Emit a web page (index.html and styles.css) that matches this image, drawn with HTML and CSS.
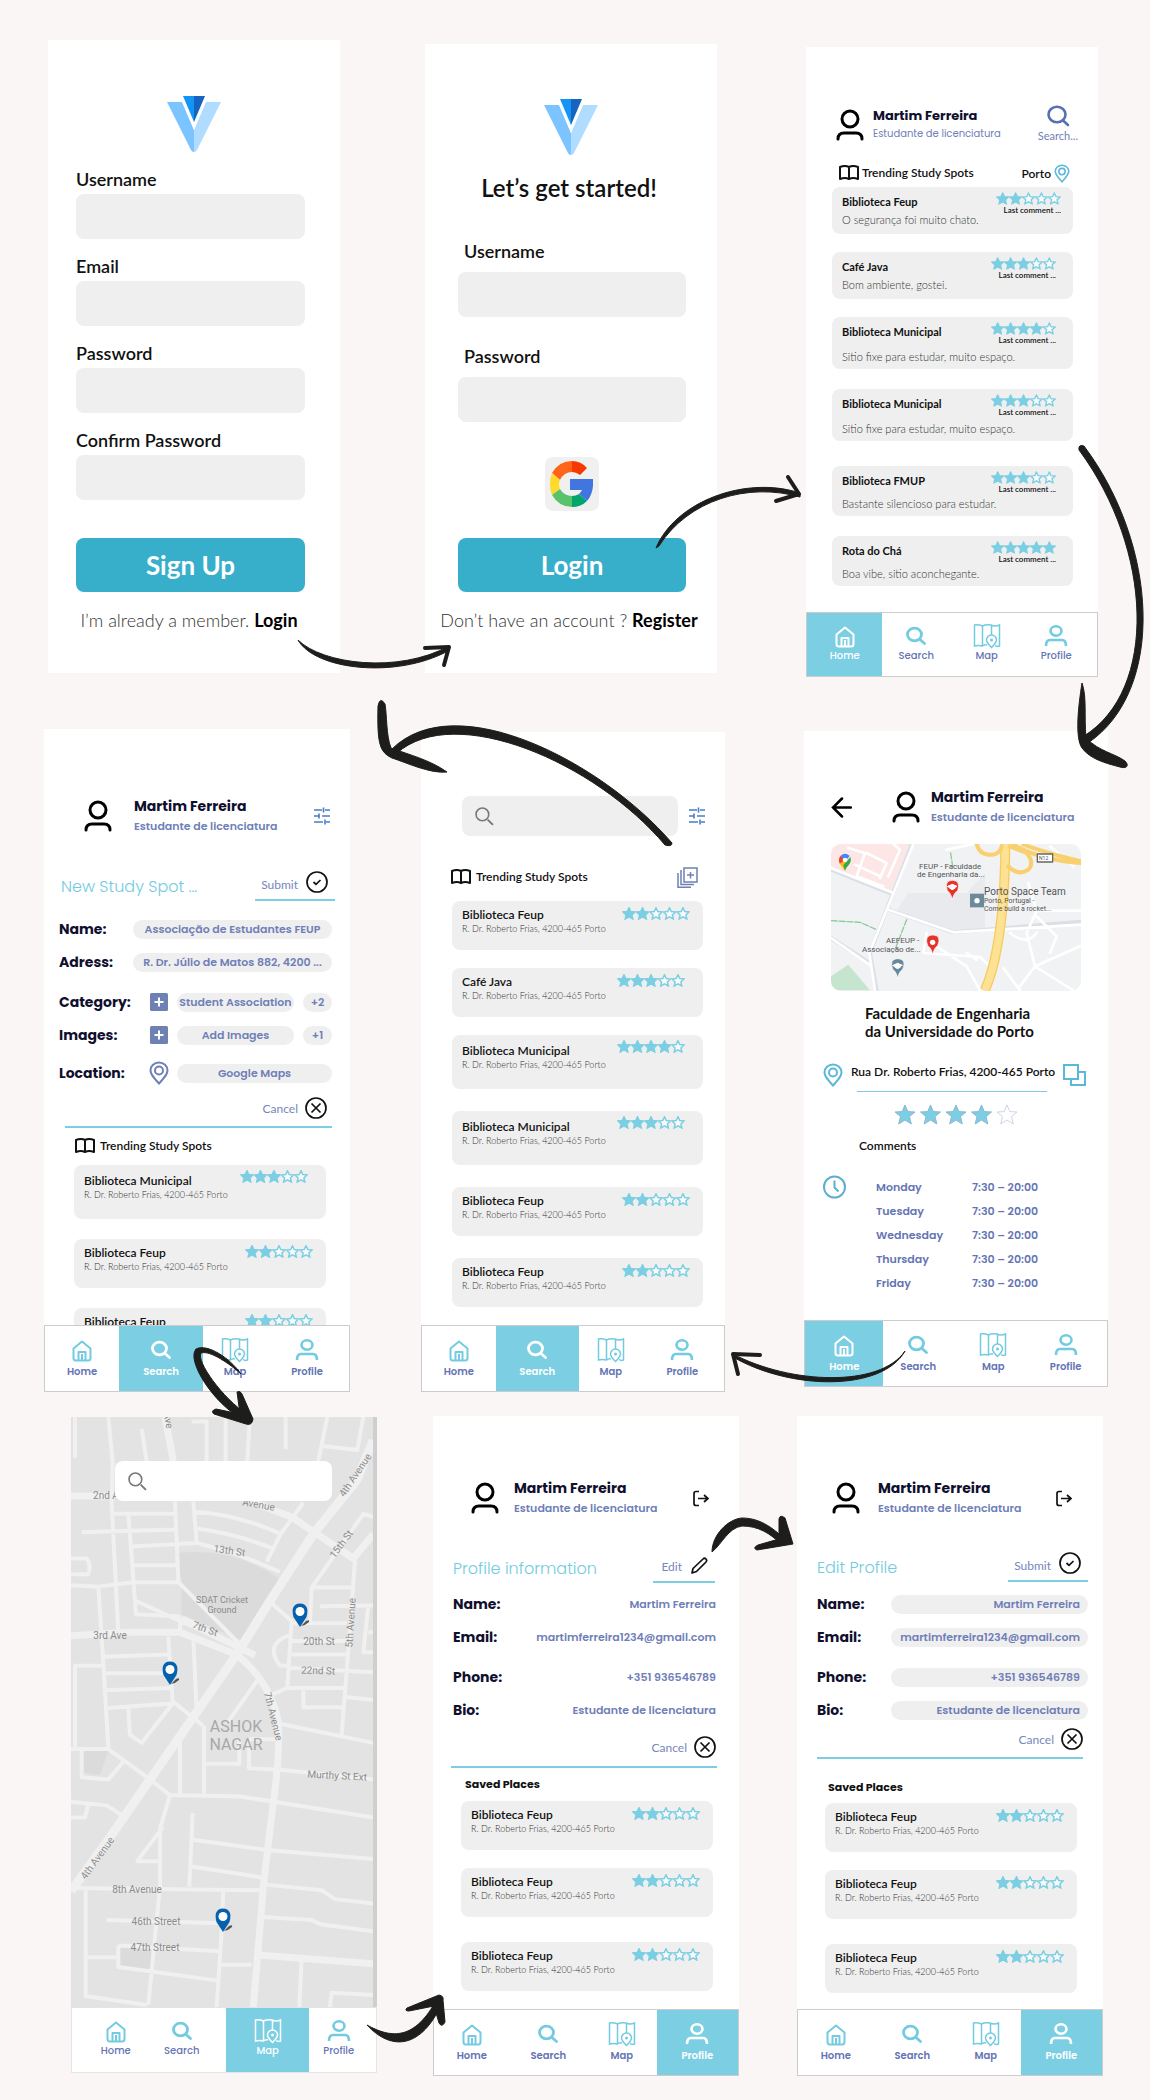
FILE: index.html
```html
<!DOCTYPE html>
<html lang="en">
<head>
<meta charset="utf-8">
<meta name="viewport" content="width=device-width, initial-scale=1">
<title>Study Spots – user flow</title>
<link rel="stylesheet" href="styles.css">
</head>
<body>
<svg class="defs" aria-hidden="true">
  <symbol id="logo" viewBox="0 0 54 56">
    <path fill="#7cc4ff" d="M0 6H15L27 34V56Q25 56 24 54Z"/><path fill="#b0dcff" d="M54 6H39L27 34V56Q29 56 30 54Z"/>
    <path fill="#fff" d="M13 0H41L27 34Z"/><path fill="#1495f5" d="M16 0H27V26Z"/><path fill="#1565c0" d="M38 0H27V26Z"/>
  </symbol>
  <symbol id="google" viewBox="0 0 43 46">
    <path fill="#ff6418" d="M22 0V11Q14 11 10 19L2 12Q9 0 22 0Z"/><path fill="#f53900" d="M22 0Q31 0 37 7L30 14Q26 11 22 11Z"/>
    <path fill="#ffda2d" d="M2 12L10 19Q8 23 10 28L2 34Q-2 23 2 12Z"/><path fill="#59c36a" d="M10 28Q14 35 22 35V46Q9 46 2 34Z"/>
    <path fill="#00a66c" d="M22 35Q26 35 29 33L37 40Q31 46 22 46Z"/><path fill="#4175df" d="M20 18H43Q44 32 37 40L29 33Q31 31 32 29H20Z"/>
  </symbol>
  <symbol id="user" viewBox="0 0 28 32"><g fill="none" stroke="currentColor" stroke-width="3" stroke-linecap="round"><ellipse cx="14" cy="10" rx="8" ry="8"/><path d="M2 30C2 25 5 24 8 24H20C23 24 26 25 26 30"/></g></symbol>
  <symbol id="find" viewBox="0 0 24 22"><ellipse cx="11" cy="9.500" rx="8.500" ry="7.800" fill="none" stroke="currentColor" stroke-width="2.600"/><path d="M17 15.500L22 20" stroke="currentColor" stroke-width="2.600" stroke-linecap="round"/></symbol>
  <symbol id="search" viewBox="-4 -4 28 26"><ellipse cx="8.500" cy="7.500" rx="7" ry="6.300" fill="none" stroke="currentColor" stroke-width="2.800"/><path d="M14 12.500L18.500 16.500" stroke="currentColor" stroke-width="2.800" stroke-linecap="round"/></symbol>
  <symbol id="search-thin" viewBox="0 0 18 18"><circle cx="7" cy="7" r="6" fill="none" stroke="#777" stroke-width="1.500"/><path d="M12 12L17 17" stroke="#777" stroke-width="1.800"/></symbol>
  <symbol id="book" viewBox="0 0 20 16"><path d="M1 2Q6 0 10 2Q14 0 19 2V14Q14 12 10 14Q6 12 1 14ZM10 2V14" fill="none" stroke="currentColor" stroke-width="2" stroke-linejoin="round"/></symbol>
  <symbol id="pin" viewBox="0 0 20 24"><g fill="none" stroke="currentColor" stroke-width="2"><path d="M10 22.500C4 16 1.500 13 1.500 9.500A8.500 8 0 0 1 18.500 9.500C18.500 13 16 16 10 22.500Z"/><circle cx="10" cy="9.500" r="4"/></g></symbol>
  <symbol id="sliders" viewBox="0 0 16 18"><path d="M0 3H8M11 3H16M9.500 0.500V5.500M0 9H5M8 9H16M5 6.500V11.500M0 15H9M12 15H16M11 12.500V17.500" fill="none" stroke="#4a7bc8" stroke-width="1.600"/></symbol>
  <symbol id="check" viewBox="0 0 22 22"><g fill="none" stroke="#111" stroke-width="1.700"><circle cx="11" cy="11" r="10"/><path d="M7.500 11L10 13.300L14.500 9"/></g></symbol>
  <symbol id="cross" viewBox="0 0 22 22"><g fill="none" stroke="#111" stroke-width="1.700"><circle cx="11" cy="11" r="10"/><path d="M6.500 6.500L15.500 15.500M15.500 6.500L6.500 15.500"/></g></symbol>
  <symbol id="plus" viewBox="0 0 18 18"><rect width="18" height="18" rx="1.500" fill="#6f80b3"/><path d="M9 4.500V13.500M4.500 9H13.500" stroke="#fff" stroke-width="2"/></symbol>
  <symbol id="stack" viewBox="0 0 21 21"><g fill="none" stroke="#6f80b3" stroke-width="1.500"><rect x="7" y="1" width="13" height="14"/><path d="M13.500 5V11.500M10 8H17M4 3V17.500H17M1 6V20.200H14"/></g></symbol>
  <symbol id="logout" viewBox="0 0 16 16"><path d="M6 1H3Q1 1 1 3V13Q1 15 3 15H6M5 8H15M11 4.500L15 8L11 11.500" fill="none" stroke="#111" stroke-width="1.700"/></symbol>
  <symbol id="pencil" viewBox="0 0 18 18"><path d="M2 16L3 11.500L13 2Q14.500 0.500 16 2Q17.300 3.500 16 5L6.500 14.500Z" fill="none" stroke="#111" stroke-width="1.700" stroke-linejoin="round"/></symbol>
  <symbol id="back" viewBox="0 0 21 21"><path d="M20 10.500H2M11 1.500L2 10.500L11 19.500" fill="none" stroke="#000" stroke-width="2.500" stroke-linecap="round"/></symbol>
  <symbol id="copy" viewBox="0 0 23 24"><g fill="none" stroke="#5cb8da" stroke-width="2"><path d="M8 15V22H22V9H16"/><rect x="1" y="2" width="14" height="14"/></g></symbol>
  <symbol id="clock" viewBox="0 0 23 23"><g fill="none" stroke="#5cb0d0" stroke-width="2"><circle cx="11.500" cy="11.500" r="10.500"/><path d="M11.500 5V12L15.500 16"/></g></symbol>
  <symbol id="home" viewBox="-4 -3 28 26"><g fill="none" stroke="currentColor" stroke-width="2" stroke-linejoin="round"><path d="M1.500 8.500L10 1.500L18.500 8.500V18Q18.500 20.500 16 20.500H4Q1.500 20.500 1.500 18Z"/><path d="M6.500 20V12H13.500V20M10 14V20"/></g></symbol>
  <symbol id="map" viewBox="0 0 28 26"><g fill="none" stroke="currentColor" stroke-width="1.500"><path d="M14 22Q12 21 9.500 23Q5 22 1.500 23V2Q5 1 9.500 3Q13 1 18 2Q22 4 26.500 2V23Q24 24 22 22.500M9.500 3V23M18.500 2V12"/><path d="M18.500 24.500Q13.500 19.500 13.500 17A5 5 0 0 1 23.500 17Q23.500 19.500 18.500 24.500Z"/></g><circle cx="18.500" cy="17" r="1.500" fill="currentColor"/></symbol>
  <symbol id="profile" viewBox="-2 -2 28 26"><g fill="none" stroke="currentColor" stroke-width="2.600"><ellipse cx="12" cy="6" rx="5.500" ry="4.700"/><path d="M2 21Q2 15 6 15H18Q22 15 22 21"/></g></symbol>
  <symbol id="star" viewBox="0 0 14 13" overflow="visible"><path d="M7 .8L8.800 4.600L13 5L9.900 7.900L10.800 12L7 9.900L3.200 12L4.100 7.900L1 5L5.200 4.600Z" stroke="#7ccfe2" stroke-width="1.500"/></symbol>
  <symbol id="s1" viewBox="0 0 14 13"><use href="#star" fill="#7ccfe2" width="14" height="13"/></symbol>
  <symbol id="s0" viewBox="0 0 14 13"><use href="#star" fill="#f8fbfc" width="14" height="13"/></symbol>
  <symbol id="rate-2" viewBox="0 0 68 13"><use href="#s1" width="14" height="13"/><use href="#s1" x="13.500" width="14" height="13"/><use href="#s0" x="27" width="14" height="13"/><use href="#s0" x="40.500" width="14" height="13"/><use href="#s0" x="54" width="14" height="13"/></symbol>
  <symbol id="rate-3" viewBox="0 0 68 13"><use href="#s1" width="14" height="13"/><use href="#s1" x="13.500" width="14" height="13"/><use href="#s1" x="27" width="14" height="13"/><use href="#s0" x="40.500" width="14" height="13"/><use href="#s0" x="54" width="14" height="13"/></symbol>
  <symbol id="rate-4" viewBox="0 0 68 13"><use href="#s1" width="14" height="13"/><use href="#s1" x="13.500" width="14" height="13"/><use href="#s1" x="27" width="14" height="13"/><use href="#s1" x="40.500" width="14" height="13"/><use href="#s0" x="54" width="14" height="13"/></symbol>
  <symbol id="rate-5" viewBox="0 0 68 13"><use href="#s1" width="14" height="13"/><use href="#s1" x="13.500" width="14" height="13"/><use href="#s1" x="27" width="14" height="13"/><use href="#s1" x="40.500" width="14" height="13"/><use href="#s1" x="54" width="14" height="13"/></symbol>
  <symbol id="map-pin" viewBox="0 0 22 26" overflow="visible"><path d="M9 23L14 18Q18 16 17 19Q14 22 9 23Z" fill="#555"/><path d="M8 24L1.500 14Q-2 1 8 .5Q18 1 14.500 14Z" fill="#0560ad"/><ellipse cx="8" cy="8.500" rx="4.500" ry="4.500" fill="#fff"/></symbol>
</svg>

<main class="board">
  <div class="row row-auth">
    <section class="screen screen-signup">
      <svg class="logo" role="img" aria-label="Logo"><use href="#logo"/></svg>
      <form class="auth-form">
        <div class="field"><label for="su-user">Username</label><input id="su-user" type="text"></div>
        <div class="field"><label for="su-email">Email</label><input id="su-email" type="email"></div>
        <div class="field"><label for="su-pass">Password</label><input id="su-pass" type="password"></div>
        <div class="field"><label for="su-conf">Confirm Password</label><input id="su-conf" type="password"></div>
        <button class="primary" type="button">Sign Up</button>
      </form>
      <p class="switch">I’m already a member. <a href="#">Login</a></p>
    </section>

    <section class="screen screen-login">
      <svg class="logo" role="img" aria-label="Logo"><use href="#logo"/></svg>
      <h1>Let’s get started!</h1>
      <form class="auth-form">
        <div class="field"><label for="li-user">Username</label><input id="li-user" type="text"></div>
        <div class="field"><label for="li-pass">Password</label><input id="li-pass" type="password"></div>
        <button class="google" type="button" aria-label="Sign in with Google"><svg><use href="#google"/></svg></button>
        <button class="primary" type="button">Login</button>
      </form>
      <p class="switch">Don’t have an account ? <a href="#">Register</a></p>
    </section>

    <section class="screen screen-home">
      <header class="who">
        <svg class="user"><use href="#user"/></svg>
        <div class="who-text"><h2>Martim Ferreira</h2><p>Estudante de licenciatura</p></div>
        <button class="find" type="button"><svg><use href="#find"/></svg>Search...</button>
      </header>
      <div class="section-title"><svg class="book"><use href="#book"/></svg><h3>Trending Study Spots</h3><span class="city">Porto<svg><use href="#pin"/></svg></span></div>
      <ul class="cards review-cards">
        <li class="card gap-18"><div class="spot"><h4>Biblioteca Feup</h4><p>O segurança foi muito chato.</p></div><div class="rating"><svg role="img" aria-label="2 of 5"><use href="#rate-2"/></svg><small>Last comment ...</small></div></li>
        <li class="card gap-18"><div class="spot"><h4>Café Java</h4><p>Bom ambiente, gostei.</p></div><div class="rating inset"><svg role="img" aria-label="3 of 5"><use href="#rate-3"/></svg><small>Last comment ...</small></div></li>
        <li class="card tall gap-20"><div class="spot"><h4>Biblioteca Municipal</h4><p>Sitio fixe para estudar, muito espaço.</p></div><div class="rating inset"><svg role="img" aria-label="4 of 5"><use href="#rate-4"/></svg><small>Last comment ...</small></div></li>
        <li class="card tall gap-25"><div class="spot"><h4>Biblioteca Municipal</h4><p>Sitio fixe para estudar, muito espaço.</p></div><div class="rating inset"><svg role="img" aria-label="3 of 5"><use href="#rate-3"/></svg><small>Last comment ...</small></div></li>
        <li class="card mid gap-20"><div class="spot"><h4>Biblioteca FMUP</h4><p>Bastante silencioso para estudar.</p></div><div class="rating inset"><svg role="img" aria-label="3 of 5"><use href="#rate-3"/></svg><small>Last comment ...</small></div></li>
        <li class="card mid gap-25"><div class="spot"><h4>Rota do Chá</h4><p>Boa vibe, sitio aconchegante.</p></div><div class="rating inset"><svg role="img" aria-label="5 of 5"><use href="#rate-5"/></svg><small>Last comment ...</small></div></li>
      </ul>
      <nav class="tabs tabs-home"><a class="on" href="#"><svg><use href="#home"/></svg>Home</a><a href="#"><svg><use href="#search"/></svg>Search</a><a href="#"><svg><use href="#map"/></svg>Map</a><a href="#"><svg><use href="#profile"/></svg>Profile</a></nav>
    </section>
  </div>

  <div class="row row-spots">
    <section class="screen screen-new">
      <header class="who">
        <svg class="user"><use href="#user"/></svg>
        <div class="who-text"><h2>Martim Ferreira</h2><p>Estudante de licenciatura</p></div>
        <button class="icon-btn" type="button" aria-label="Filters"><svg class="sliders"><use href="#sliders"/></svg></button>
      </header>
      <div class="form-title"><h3>New Study Spot ...</h3><button type="button" class="action">Submit<svg><use href="#check"/></svg></button></div>
      <form class="details">
        <div class="line"><label for="n-name">Name:</label><input id="n-name" value="Associação de Estudantes FEUP"></div>
        <div class="line"><label for="n-addr">Adress:</label><input id="n-addr" value="R. Dr. Júlio de Matos 882, 4200 ..."></div>
        <div class="line wide-gap"><label for="n-cat">Category:</label><svg class="plus"><use href="#plus"/></svg><input id="n-cat" value="Student Association"><button type="button" class="more">+2</button></div>
        <div class="line"><label for="n-img">Images:</label><svg class="plus"><use href="#plus"/></svg><input id="n-img" value="Add Images"><button type="button" class="more">+1</button></div>
        <div class="line"><label for="n-loc">Location:</label><svg class="place"><use href="#pin"/></svg><input id="n-loc" value="Google Maps"></div>
      </form>
      <button type="button" class="cancel">Cancel<svg><use href="#cross"/></svg></button>
      <hr>
      <div class="section-title"><svg class="book"><use href="#book"/></svg><h3>Trending Study Spots</h3></div>
      <ul class="cards clipped">
        <li class="card tall gap-20"><div class="spot"><h4>Biblioteca Municipal</h4><p>R. Dr. Roberto Frias, 4200-465 Porto</p></div><div class="rating inset"><svg role="img" aria-label="3 of 5"><use href="#rate-3"/></svg></div></li>
        <li class="card gap-20"><div class="spot"><h4>Biblioteca Feup</h4><p>R. Dr. Roberto Frias, 4200-465 Porto</p></div><div class="rating"><svg role="img" aria-label="2 of 5"><use href="#rate-2"/></svg></div></li>
        <li class="card"><h4>Biblioteca Feup</h4><div class="rating"><svg role="img" aria-label="2 of 5"><use href="#rate-2"/></svg></div></li>
      </ul>
      <nav class="tabs tabs-search"><a href="#"><svg><use href="#home"/></svg>Home</a><a class="on" href="#"><svg><use href="#search"/></svg>Search</a><a href="#"><svg><use href="#map"/></svg>Map</a><a href="#"><svg><use href="#profile"/></svg>Profile</a></nav>
    </section>

    <section class="screen screen-search">
      <div class="search-row"><label class="search-box"><svg><use href="#search-thin"/></svg><input type="search" aria-label="Search spots"></label><button class="icon-btn" type="button" aria-label="Filters"><svg class="sliders"><use href="#sliders"/></svg></button></div>
      <div class="section-title"><svg class="book"><use href="#book"/></svg><h3>Trending Study Spots</h3><button class="icon-btn" type="button" aria-label="Add spot"><svg class="stack"><use href="#stack"/></svg></button></div>
      <ul class="cards">
        <li class="card gap-18"><div class="spot"><h4>Biblioteca Feup</h4><p>R. Dr. Roberto Frias, 4200-465 Porto</p></div><div class="rating"><svg role="img" aria-label="2 of 5"><use href="#rate-2"/></svg></div></li>
        <li class="card gap-18"><div class="spot"><h4>Café Java</h4><p>R. Dr. Roberto Frias, 4200-465 Porto</p></div><div class="rating inset"><svg role="img" aria-label="3 of 5"><use href="#rate-3"/></svg></div></li>
        <li class="card tall gap-22"><div class="spot"><h4>Biblioteca Municipal</h4><p>R. Dr. Roberto Frias, 4200-465 Porto</p></div><div class="rating inset"><svg role="img" aria-label="4 of 5"><use href="#rate-4"/></svg></div></li>
        <li class="card tall gap-22"><div class="spot"><h4>Biblioteca Municipal</h4><p>R. Dr. Roberto Frias, 4200-465 Porto</p></div><div class="rating inset"><svg role="img" aria-label="3 of 5"><use href="#rate-3"/></svg></div></li>
        <li class="card gap-22"><div class="spot"><h4>Biblioteca Feup</h4><p>R. Dr. Roberto Frias, 4200-465 Porto</p></div><div class="rating"><svg role="img" aria-label="2 of 5"><use href="#rate-2"/></svg></div></li>
        <li class="card gap-18"><div class="spot"><h4>Biblioteca Feup</h4><p>R. Dr. Roberto Frias, 4200-465 Porto</p></div><div class="rating"><svg role="img" aria-label="2 of 5"><use href="#rate-2"/></svg></div></li>
      </ul>
      <nav class="tabs tabs-search"><a href="#"><svg><use href="#home"/></svg>Home</a><a class="on" href="#"><svg><use href="#search"/></svg>Search</a><a href="#"><svg><use href="#map"/></svg>Map</a><a href="#"><svg><use href="#profile"/></svg>Profile</a></nav>
    </section>

    <section class="screen screen-place">
      <header class="who">
        <button class="icon-btn" type="button" aria-label="Back"><svg class="back"><use href="#back"/></svg></button>
        <svg class="user"><use href="#user"/></svg>
        <div class="who-text"><h2>Martim Ferreira</h2><p>Estudante de licenciatura</p></div>
      </header>
      <svg class="place-map" viewBox="0 0 250 147" preserveAspectRatio="xMidYMid slice">
        <rect width="250" height="147" fill="#f0f2f4"/>
        <g transform="scale(.3333) translate(-153 -373)" fill="none" stroke-linecap="round" stroke-linejoin="round">
          <path d="M153 373H388L330 520L153 450Z" fill="#fde6e6"/>
          <path d="M153 770L205 735L270 812H153Z" fill="#c5e5cf"/>
          <path d="M385 520L560 520L615 460V635L520 640L345 580Z" fill="#e8eaee"/>
          <g stroke="#dcdfe6" stroke-width="12"><path d="M153 450L333 522M395 373L270 700L290 812M325 570L520 638L902 606M153 655L268 730"/></g>
          <g stroke="#fff" stroke-width="8"><path d="M153 445L335 518M400 373L268 700L285 812M325 570L520 638L902 615M153 655L268 735M205 385L255 400L230 470L310 500M260 400L320 430L300 475M340 373L360 390L325 470M225 435L300 470M440 640L430 700M430 700L600 712L640 750M470 680L560 740L600 812M770 573L740 640L765 740L720 800M765 740L880 812M900 680L765 740M745 490L770 573H902M670 745L720 812M690 640Q740 680 770 640M500 390L580 373M810 380L880 440M560 700L590 720M770 590L830 650L810 700"/></g>
          <path d="M153 603L240 608L290 630M380 600L345 690M512 400L518 440" stroke="#8acb9d" stroke-width="4" stroke-dasharray="18 6"/>
          <path d="M676 373Q675 560 650 690Q640 750 615 812" stroke="#f7cb62" stroke-width="30" stroke-linecap="butt"/><path d="M676 373Q675 560 650 690Q640 750 615 812" stroke="#fde293" stroke-width="22" stroke-linecap="butt"/>
          <path d="M590 373Q600 410 640 405Q662 400 665 380M690 380L740 400Q765 430 745 450Q715 470 685 440M700 375Q780 420 902 430M730 375Q800 400 902 425" stroke="#f9d06d" stroke-width="12"/>
          <rect x="772" y="403" width="46" height="24" fill="#fff" stroke="#666" stroke-width="4"/>
          <rect x="570" y="522" width="42" height="41" fill="#6c8a99"/><circle cx="591" cy="543" r="8" fill="#fff"/>
          <g stroke="#fff" stroke-width="2"><path d="M517 540Q513 520 502 513Q492 483 517 482Q543 483 533 513Q521 520 517 540Z" fill="#e5322d"/><path d="M458 704Q454 685 443 678Q432 647 458 646Q486 647 473 678Q462 685 458 704Z" fill="#e5322d"/><path d="M353 775Q349 756 338 749Q327 718 353 717Q381 718 368 749Q357 756 353 775Z" fill="#66899b"/></g>
          <path d="M503 500L517 494L531 500L517 507ZM509 506Q517 514 525 506M339 737L353 731L367 737L353 744ZM345 743Q353 751 361 743" fill="#fff" stroke="#fff" stroke-width="3"/><circle cx="458" cy="668" r="8" fill="#fff"/>
          <path d="M195 453L179 432L190 418L209 428Z" fill="#fbbc04"/><path d="M195 453Q197 444 206 436Q216 425 211 412L190 437Z" fill="#34a853"/><path d="M179 432Q173 418 182 408L196 420Z" fill="#ea4335"/><path d="M182 408Q196 396 209 409L196 424Z" fill="#4285f4"/><circle cx="195" cy="421" r="7" fill="#fff"/>
        </g>
        <g class="map-text"><text x="88" y="25">FEUP - Faculdade</text><text x="86" y="33">de Engenharia da...</text><text x="55" y="99">AEFEUP -</text><text x="31" y="108">Associação de...</text><text class="road-no" x="208" y="16">N12</text><text class="team" x="153" y="51">Porto Space Team</text><text class="team-sub" x="153" y="59">Porto, Portugal -</text><text class="team-sub" x="153" y="67">Come build a rocket...</text></g>
      </svg>
      <h3 class="place-name">Faculdade de Engenharia<br>da Universidade do Porto</h3>
      <div class="address"><svg class="place"><use href="#pin"/></svg><p>Rua Dr. Roberto Frias, 4200-465 Porto</p><button class="icon-btn" type="button" aria-label="Copy address"><svg class="copy"><use href="#copy"/></svg></button></div>
      <hr>
      <svg class="big-stars" viewBox="0 0 124 21" role="img" aria-label="4 of 5"><g stroke="#8cb6d3" fill="#7ccfe2"><path id="bs" d="M11 1L13.800 7.600L21 8L15.500 12.500L17.300 20L11 16L4.700 20L6.500 12.500L1 8L8.200 7.600Z"/><use href="#bs" x="25.500"/><use href="#bs" x="51"/><use href="#bs" x="76.500"/></g><path transform="translate(102)" fill="#fff" stroke="#cfd5e8" d="M11 1L13.800 7.600L21 8L15.500 12.500L17.300 20L11 16L4.700 20L6.500 12.500L1 8L8.200 7.600Z"/></svg>
      <h4 class="comments">Comments</h4>
      <div class="hours"><svg class="clock"><use href="#clock"/></svg>
        <table><tbody><tr><th scope="row">Monday</th><td>7:30 – 20:00</td></tr><tr><th scope="row">Tuesday</th><td>7:30 – 20:00</td></tr><tr><th scope="row">Wednesday</th><td>7:30 – 20:00</td></tr><tr><th scope="row">Thursday</th><td>7:30 – 20:00</td></tr><tr><th scope="row">Friday</th><td>7:30 – 20:00</td></tr></tbody></table>
      </div>
      <nav class="tabs tabs-place"><a class="on" href="#"><svg><use href="#home"/></svg>Home</a><a href="#"><svg><use href="#search"/></svg>Search</a><a href="#"><svg><use href="#map"/></svg>Map</a><a href="#"><svg><use href="#profile"/></svg>Profile</a></nav>
    </section>
  </div>

  <div class="row row-profile">
    <section class="screen screen-map">
      <div class="city-map">
        <svg viewBox="0 0 306 590" preserveAspectRatio="xMidYMid slice">
          <rect width="306" height="590" fill="#e3e3e3"/>
          <g class="roads" transform="scale(.3333 .4464) translate(-63 -38)">
            <path fill="#dbdbdb" stroke="none" d="M388 342Q560 330 690 402L580 540L395 480V400L388 390ZM100 785H175L150 840L100 835ZM205 1225H305V1280L205 1268Z"/>
            <g stroke-width="4"><path d="M175 38L188 140L185 230L205 520M75 38V130M275 65L290 137M425 48H470V137M527 38V137M600 38L592 137M707 38V110M832 38L805 137M818 103L922 112L940 38M185 255H378M95 296L378 290M235 255L258 480L390 485M245 328L440 320L560 345L690 385M250 370H380M250 408H385L600 570M375 227L385 405M430 227L440 320M430 250Q560 255 692 300L650 362M440 288Q560 300 670 333M692 300L760 230M63 415L145 418L250 408M145 418L160 590L175 780M63 355H110Q125 370 115 390H63M258 450L390 495L570 555M390 485V515M430 530L440 700M355 530L368 675L460 730M160 575L355 570M165 612H340M165 650L360 645M175 690L368 680L275 768L240 750L235 690M75 785V595H155M63 782H175L300 850L360 885L570 888L970 935M95 785V845L175 850L220 810M390 760V885M462 730V885M462 815H568V760M535 720L625 625M597 760V825L690 828L970 850M690 725L970 768M690 760H597M665 455L725 495L712 645L665 660M725 525Q640 545 690 595H720M730 500H890M725 540H890M725 570H890M720 600L970 610M712 645H880M760 650V688H880M810 462L970 460M915 360L895 560L875 750M955 460L940 565H970M955 520H970M780 500L785 420L940 255L970 262M785 420H915M890 665L970 672M63 900L170 908L215 930M63 935H105L115 905M360 885L330 960V1090L295 1355M340 955L262 1033H330M428 925L418 1090M428 985L650 1008L970 1028M425 1045L640 1070M640 1085L815 1098L855 1118L970 1128M63 1093L630 1098M107 1093V1335L290 1355M520 1100L515 1190L500 1360M170 1165L520 1172M205 1222L510 1235M107 1248H200M205 1222V1270L500 1300M508 1265H605M640 1158L785 1165L815 1175L970 1190M755 1250L748 1360M840 1360L845 1328L970 1333"/></g>
            <g stroke-width="7"><path d="M345 38L370 137M63 215H195M600 227L725 262L910 355L970 300M63 528L240 520L390 520L560 570M395 490L615 572M625 1243L970 1263"/></g>
            <g stroke-width="9"><path d="M970 90L920 180L790 300L660 450L560 570L430 710L300 850L170 990L63 1100"/></g>
            <g stroke-width="7"><path d="M560 570Q660 630 685 720Q690 800 670 900L640 1090L610 1360"/></g>
          </g>
          <rect x="302" width="4" height="590" fill="#cfcfcf"/>
          <g class="street-names">
            <text x="48" y="82">2nd Avenue</text><text transform="translate(187 91) rotate(10)">Avenue</text><text transform="translate(94 4) rotate(80)">Ave</text><text transform="translate(287 60) rotate(-56)">4th Avenue</text><text transform="translate(158 137) rotate(8)">13th St</text><text transform="translate(273 129) rotate(-53)">15th St</text>
            <text class="park" x="151" y="186">SDAT Cricket</text><text class="park" x="151" y="196">Ground</text><text transform="translate(133 215) rotate(20)">7th St</text><text x="39" y="222">3rd Ave</text><text transform="translate(283 206) rotate(-86)">5th Avenue</text><text x="248" y="228">20th St</text><text transform="translate(247 257) rotate(2)">22nd St</text><text transform="translate(199 300) rotate(76)">7th Avenue</text>
            <text class="area" x="165" y="315">ASHOK</text><text class="area" x="165" y="333">NAGAR</text><text transform="translate(266 362) rotate(3)">Murthy St Ext</text><text transform="translate(29 443) rotate(-54)">4th Avenue</text><text x="66" y="476">8th Avenue</text><text x="85" y="508">46th Street</text><text x="84" y="534">47th Street</text>
          </g>
          <use href="#map-pin" x="221" y="186" width="22" height="26"/><use href="#map-pin" x="91" y="244" width="22" height="26"/><use href="#map-pin" x="144" y="491" width="22" height="26"/>
        </svg>
        <label class="search-box"><svg><use href="#search-thin"/></svg><input type="search" aria-label="Search map"></label>
      </div>
      <nav class="tabs tabs-map"><a href="#"><svg><use href="#home"/></svg>Home</a><a href="#"><svg><use href="#search"/></svg>Search</a><a class="on" href="#"><svg><use href="#map"/></svg>Map</a><a href="#"><svg><use href="#profile"/></svg>Profile</a></nav>
    </section>

    <section class="screen screen-profile">
      <header class="who">
        <svg class="user"><use href="#user"/></svg>
        <div class="who-text"><h2>Martim Ferreira</h2><p>Estudante de licenciatura</p></div>
        <button class="icon-btn" type="button" aria-label="Log out"><svg class="logout"><use href="#logout"/></svg></button>
      </header>
      <div class="form-title"><h3>Profile information</h3><button type="button" class="action">Edit<svg><use href="#pencil"/></svg></button></div>
      <dl class="details">
        <div class="line"><dt>Name:</dt><dd>Martim Ferreira</dd></div>
        <div class="line"><dt>Email:</dt><dd>martimferreira1234@gmail.com</dd></div>
        <div class="line wide-gap"><dt>Phone:</dt><dd>+351 936546789</dd></div>
        <div class="line"><dt>Bio:</dt><dd>Estudante de licenciatura</dd></div>
      </dl>
      <button type="button" class="cancel">Cancel<svg><use href="#cross"/></svg></button>
      <hr>
      <h4 class="saved">Saved Places</h4>
      <ul class="cards">
        <li class="card gap-18"><div class="spot"><h4>Biblioteca Feup</h4><p>R. Dr. Roberto Frias, 4200-465 Porto</p></div><div class="rating"><svg role="img" aria-label="2 of 5"><use href="#rate-2"/></svg></div></li>
        <li class="card gap-25"><div class="spot"><h4>Biblioteca Feup</h4><p>R. Dr. Roberto Frias, 4200-465 Porto</p></div><div class="rating"><svg role="img" aria-label="2 of 5"><use href="#rate-2"/></svg></div></li>
        <li class="card gap-18"><div class="spot"><h4>Biblioteca Feup</h4><p>R. Dr. Roberto Frias, 4200-465 Porto</p></div><div class="rating"><svg role="img" aria-label="2 of 5"><use href="#rate-2"/></svg></div></li>
      </ul>
      <nav class="tabs tabs-profile"><a href="#"><svg><use href="#home"/></svg>Home</a><a href="#"><svg><use href="#search"/></svg>Search</a><a href="#"><svg><use href="#map"/></svg>Map</a><a class="on" href="#"><svg><use href="#profile"/></svg>Profile</a></nav>
    </section>

    <section class="screen screen-edit">
      <header class="who">
        <svg class="user"><use href="#user"/></svg>
        <div class="who-text"><h2>Martim Ferreira</h2><p>Estudante de licenciatura</p></div>
        <button class="icon-btn" type="button" aria-label="Log out"><svg class="logout"><use href="#logout"/></svg></button>
      </header>
      <div class="form-title"><h3>Edit Profile</h3><button type="button" class="action">Submit<svg><use href="#check"/></svg></button></div>
      <form class="details">
        <div class="line"><label for="e-name">Name:</label><input id="e-name" value="Martim Ferreira"></div>
        <div class="line"><label for="e-mail">Email:</label><input id="e-mail" value="martimferreira1234@gmail.com"></div>
        <div class="line wide-gap"><label for="e-phone">Phone:</label><input id="e-phone" value="+351 936546789"></div>
        <div class="line"><label for="e-bio">Bio:</label><input id="e-bio" value="Estudante de licenciatura"></div>
      </form>
      <button type="button" class="cancel">Cancel<svg><use href="#cross"/></svg></button>
      <hr>
      <h4 class="saved">Saved Places</h4>
      <ul class="cards">
        <li class="card gap-18"><div class="spot"><h4>Biblioteca Feup</h4><p>R. Dr. Roberto Frias, 4200-465 Porto</p></div><div class="rating"><svg role="img" aria-label="2 of 5"><use href="#rate-2"/></svg></div></li>
        <li class="card gap-25"><div class="spot"><h4>Biblioteca Feup</h4><p>R. Dr. Roberto Frias, 4200-465 Porto</p></div><div class="rating"><svg role="img" aria-label="2 of 5"><use href="#rate-2"/></svg></div></li>
        <li class="card gap-18"><div class="spot"><h4>Biblioteca Feup</h4><p>R. Dr. Roberto Frias, 4200-465 Porto</p></div><div class="rating"><svg role="img" aria-label="2 of 5"><use href="#rate-2"/></svg></div></li>
      </ul>
      <nav class="tabs tabs-profile"><a href="#"><svg><use href="#home"/></svg>Home</a><a href="#"><svg><use href="#search"/></svg>Search</a><a href="#"><svg><use href="#map"/></svg>Map</a><a class="on" href="#"><svg><use href="#profile"/></svg>Profile</a></nav>
    </section>
  </div>

  <svg class="arrows" viewBox="0 0 1150 2100" aria-hidden="true">
    <!-- sign up to login -->
    <path class="ink" d="M298 640C322 664 398 674 449 646L448 651C396 679 315 670 298 640Z"/><path class="pen" d="M425 648L449 647L444 665"/>
    <!-- login to home -->
    <path class="ink" d="M656 548C675 502 745 475 800 493V497C748 482 688 500 659 546Z"/><path class="pen" d="M788 477L799 494L776 501"/>
    <!-- home to place -->
    <path class="ink" d="M1084 446C1158 545 1166 690 1088 743L1084 736C1158 690 1153 550 1079 450Q1078 444 1084 446Z"/>
    <path class="ink" d="M1082 683C1087 697 1084 715 1086 738C1100 752 1114 753 1125 761C1130 766 1126 769 1120 767C1105 763 1090 759 1082 748C1075 738 1078 708 1082 683Z"/>
    <!-- search to new spot -->
    <path class="ink" d="M672 843C600 760 455 687 392 749L397 753C455 702 595 762 665 845Q672 847 672 843Z"/>
    <path class="ink" d="M378 706Q380 696 385 704C387 715 386 735 391 748C410 755 430 760 447 772C430 774 405 762 392 758C380 752 377 745 378 706Z"/>
    <!-- new spot to map -->
    <path class="ink" d="M241 1374C230 1358 207 1343 196 1349C186 1360 213 1404 244 1420L248 1415C222 1398 196 1361 201 1353C210 1350 230 1364 241 1374Z"/><path class="ink" d="M237 1392Q240 1390 242 1394L253 1419Q252 1426 246 1424L214 1414Q210 1411 216 1409L240 1414Z"/>
    <!-- place to search -->
    <path class="ink" d="M905 1351C880 1388 790 1384 733 1354V1357C790 1390 882 1392 905 1351Z"/><path class="pen" d="M760 1355L733 1354L738 1374"/>
    <!-- map to profile -->
    <path class="ink" d="M367 2025C392 2039 415 2040 437 1999L442 2003C422 2048 392 2052 367 2025Z"/><path class="ink" d="M407 2008L439 1995Q444 1996 443 2000L445 2022Q442 2028 439 2023L434 2006L409 2011Q404 2011 407 2008Z"/>
    <!-- profile to edit -->
    <path class="ink" d="M712 1552C712 1535 728 1519 742 1518C762 1518 775 1530 788 1542L782 1545C770 1533 758 1526 742 1526C728 1528 722 1544 712 1552Z"/><path class="ink" d="M779 1519Q780 1514 785 1518L793 1544L757 1550Q752 1548 758 1545L779 1539Z"/>
  </svg>
</main>
</body>
</html>
```
FILE: styles.css
```css
* { box-sizing: border-box; }
body { margin: 0; background: #faf6f5; color: #111; font-family: Lato, "Open Sans", sans-serif; }
h1, h2, h3, h4, p, ul, dl, dd { margin: 0; padding: 0; }
ul { list-style: none; }
button, input { border: 0; margin: 0; padding: 0; font: inherit; color: inherit; background: none; min-width: 0; }
a { color: inherit; text-decoration: none; }
svg { display: block; flex: none; }
hr { border: 0; margin: 0; background: #7ccfe2; height: 2px; }
.defs { position: absolute; width: 0; height: 0; }

/* Board */
.board { position: relative; max-width: 1150px; margin: 0 auto; padding: 40px 0 22px; }
.arrows { position: absolute; top: 0; left: 0; width: 100%; pointer-events: none; }
.ink { fill: #1d1d1b; stroke: #1d1d1b; stroke-width: 1; stroke-linejoin: round; }
.pen { fill: none; stroke: #1d1d1b; stroke-width: 4; stroke-linecap: round; stroke-linejoin: round; }
.row { display: grid; align-items: start; }
.row-auth { grid-template-columns: 377fr 381fr 292fr; padding: 0 52px 0 48px; }
.row-spots { grid-template-columns: 377fr 383fr 304fr; padding: 52px 42px 0 44px; }
.row-profile { grid-template-columns: 362fr 364fr 306fr; padding: 24px 47px 0 71px; }
.screen { display: flex; flex-direction: column; width: 100%; background: #fff; }
.row-auth .screen { max-width: 292px; }
.row-spots .screen { max-width: 304px; }
.row-spots .screen-new { max-width: 306px; }
.row-profile .screen { max-width: 306px; }

/* Sign up and login */
.logo { width: 54px; height: 56px; margin: 0 auto; }
.screen-signup { padding: 56px 0 41px; }
.screen-login { margin-top: 4px; padding: 55px 0 41px; }
.screen-login h1 { margin-top: 19px; padding-right: 4px; text-align: center; font-size: 24px; line-height: 28px; font-weight: 600; }
.auth-form { display: flex; flex-direction: column; gap: 15px; padding: 15px 35px 0 28px; }
.field { display: flex; flex-direction: column; gap: 3px; }
.field label { font-size: 18px; line-height: 24px; font-weight: 600; }
.field input { width: 100%; height: 45px; border-radius: 8px; background: #efefef; padding: 0 10px; }
.primary { height: 54px; border-radius: 8px; background: #37afca; color: #fff; font-size: 26px; font-weight: 700; }
.screen-signup .primary { margin-top: 23px; }
.switch { margin-top: 16px; text-align: center; font-size: 18px; line-height: 24px; font-weight: 300; color: #333; white-space: nowrap; }
.switch a { font-weight: 700; color: #000; }
.screen-signup .switch { padding-right: 10px; }
.screen-login .switch { padding-right: 4px; }
.screen-login .auth-form { gap: 27px; padding: 37px 31px 0 33px; }
.screen-login .field { gap: 9px; }
.screen-login .field label { padding-left: 6px; }
.google { align-self: center; width: 54px; height: 54px; margin-top: 8px; padding: 4px 5px; border-radius: 8px; background: #f0f0f0; }
.google svg { width: 43px; height: 46px; }

/* Person header */
.who { display: flex; align-items: center; }
.user { width: 28px; height: 34px; color: #000; }
.who h2, .who p, .details, .tabs, .saved, .form-title h3, .hours { font-family: Poppins, Inter, sans-serif; }
.who h2 { font-size: 14px; line-height: 20px; font-weight: 700; color: #100f2e; }
.who p { font-size: 11px; line-height: 20px; font-weight: 600; color: #6f80b8; }
.who-text { white-space: nowrap; }
.icon-btn { display: block; }
.who .icon-btn, .section-title .icon-btn { margin-left: auto; }
.sliders { width: 16px; height: 18px; }
.logout { width: 16px; height: 17px; }
.back { width: 21px; height: 21px; }
.stack { width: 21px; height: 21px; }

/* Section title and cards */
.section-title { display: flex; align-items: center; height: 20px; }
.section-title h3 { font-size: 12px; line-height: 20px; font-weight: 600; margin-left: 5px; }
.book { width: 20px; height: 16px; }
.cards { padding: 0 22px 0 31px; }
.card { display: flex; justify-content: space-between; height: 49px; border-radius: 8px; background: #efefef; padding: 6px 13px 0 10px; white-space: nowrap; }
.card.tall { height: 54px; padding-top: 8px; }
.spot { flex: 1; min-width: 0; }
.card h4 { font-size: 12px; line-height: 16px; font-weight: 600; }
.card p { font-size: 9px; line-height: 12px; font-weight: 300; color: #333; }
.rating { flex: none; }
.rating svg { width: 68px; height: 13px; }
.card.tall .rating svg { margin-top: -3px; }
.rating.inset { padding-right: 5px; }
.gap-18 { margin-bottom: 18px; }
.gap-20 { margin-bottom: 20px; }
.gap-22 { margin-bottom: 22px; }
.gap-25 { margin-bottom: 25px; }

/* Tabs */
.tabs { display: grid; height: 67px; border: 1px solid #ccc; background: #fff; color: #6474b4; font-size: 10px; line-height: 14px; font-weight: 600; }
.tabs a { display: flex; flex-direction: column; align-items: center; padding-top: 11px; }
.tabs svg { width: 28px; height: 26px; margin-bottom: 2px; color: #72cbe0; }
.tabs .on { background: #7ccfe2; color: #fff; }
.tabs .on svg { color: #fff; }
.tabs-home { grid-template-columns: 76fr 68fr 74fr 66fr; padding-right: 8px; height: 65px; font-weight: 500; }
.tabs-home a, .tabs-map a { padding-top: 10px; }
.tabs-home svg, .tabs-map svg { margin-bottom: 0; }
.tabs-place { grid-template-columns: 79fr 70fr 81fr 65fr; padding-right: 9px; }
.tabs-search { grid-template-columns: 74fr 84fr 64fr 80fr; padding-right: 2px; }
.tabs-profile { grid-template-columns: 76fr 78fr 70fr 82fr; }
.tabs-map { grid-template-columns: 78fr 77fr 84fr 67fr; height: 66px; border-color: #e4e4e4; font-weight: 500; }
.tabs-map a:first-child { padding-left: 10px; }
.tabs-map a:nth-child(2) { padding-right: 12px; }
.tabs-map a:last-child { padding-right: 8px; }

/* Home */
.screen-home { margin-top: 7px; padding-top: 57px; }
.screen-home .who { height: 42px; padding: 0 20px 0 30px; gap: 9px; }
.screen-home .who h2 { font-size: 13px; line-height: 18px; }
.screen-home .who p { font-size: 10px; line-height: 18px; font-weight: 400; }
.find { margin-left: auto; display: flex; flex-direction: column; align-items: center; font-size: 11px; line-height: 18px; color: #6f80b8; }
.find svg { width: 24px; height: 22px; color: #5570b4; }
.screen-home .section-title { margin: 17px 28px 4px 33px; }
.screen-home .section-title h3 { margin-left: 3px; }
.city { margin-left: auto; display: flex; align-items: center; gap: 3px; font-size: 12px; font-weight: 600; }
.city svg { width: 16px; height: 19px; color: #5cb8da; }
.cards.review-cards { padding: 0 25px 1px 26px; }
.review-cards .card, .review-cards .card.tall { padding: 5px 12px 0 10px; }
.review-cards .card { height: 47px; }
.review-cards .card.tall { height: 52px; }
.review-cards .card.mid { height: 50px; }
.review-cards h4 { font-size: 11px; line-height: 19px; font-weight: 700; }
.review-cards p { font-size: 11px; line-height: 18px; }
.review-cards .tall p { margin-top: 7px; }
.review-cards .mid p { margin-top: 5px; }
.review-cards .rating { text-align: right; font-size: 8px; line-height: 10px; font-weight: 600; }
.review-cards .rating svg, .review-cards .card.tall .rating svg { width: 65px; margin: 0; }
.review-cards small { display: block; font-size: 8px; }

/* Forms */
.form-title { display: flex; justify-content: space-between; align-items: center; height: 30px; }
.form-title h3 { font-size: 16px; font-weight: 300; color: #72cbe0; }
.action { display: flex; align-items: flex-end; justify-content: flex-end; gap: 8px; width: 80px; height: 30px; padding: 0 7px 6px 0; border-bottom: 2px solid #7ccfe2; font-size: 12px; line-height: 16px; color: #7687bb; }
.action svg, .cancel svg { width: 22px; height: 22px; }
.details { font-size: 11px; color: #6f80b8; font-weight: 600; }
.line { display: flex; align-items: center; height: 20px; margin-top: 13px; white-space: nowrap; }
.line label, .line dt { flex: none; width: 74px; font-size: 14px; font-weight: 700; color: #100f2e; }
.line input, .more { height: 19px; border-radius: 10px; background: #efefef; text-align: center; }
.line input { flex: 1; }
.line dd { margin-left: auto; }
.wide-gap { margin-top: 20px; }
.cancel { align-self: flex-end; display: flex; align-items: center; gap: 7px; font-size: 12px; color: #7687bb; }

/* New spot */
.screen-new .who { padding: 67px 20px 0 40px; gap: 22px; }
.screen-new .form-title { margin: 35px 15px 0 17px; }
.screen-new .details { padding: 5px 18px 0 15px; }
.screen-new .line:last-child { margin-top: 18px; }
.plus { width: 18px; height: 18px; margin: 0 9px 0 17px; }
.place { width: 20px; height: 24px; }
.line .place { margin: 0 8px 0 16px; }
.more { width: 29px; margin-left: 9px; }
.screen-new .cancel { margin: 14px 23px 7px 0; }
.screen-new hr { margin: 0 18px 0 21px; }
.screen-new .section-title { margin: 8px 0 9px 31px; }
.screen-new .cards { padding: 0 24px 0 30px; }
.clipped { height: 160px; overflow: hidden; }

/* Search */
.screen-search { margin-top: 3px; padding-top: 64px; }
.search-row { display: flex; align-items: center; gap: 11px; padding: 0 20px 0 41px; }
.search-box { display: flex; align-items: center; flex: 1; min-width: 0; height: 40px; padding-left: 13px; border-radius: 8px; background: #efefef; }
.search-box svg { width: 19px; height: 19px; }
.search-box input { flex: 1; width: 0; height: 40px; padding: 0 8px; }
.screen-search .section-title { margin: 31px 27px 14px 30px; }

/* Place */
.screen-place { margin-top: 2px; padding-top: 56px; }
.screen-place .who { padding-left: 27px; }
.screen-place .who .icon-btn { margin: 0 40px 0 0; }
.screen-place .who-text { margin-left: 11px; }
.place-map { height: 147px; margin: 17px 27px 0; border-radius: 10px; }
.map-text { font: 8px Roboto, sans-serif; fill: #555; }
.map-text .team { font-size: 10px; }
.map-text .team-sub { font-size: 7px; }
.map-text .road-no { font-size: 5px; }
.place-name { margin: 13px 0 0 61px; font-size: 15px; line-height: 18px; font-weight: 700; }
.address { display: flex; align-items: flex-start; height: 25px; margin: 23px 22px 0 19px; }
.address p { margin-left: 8px; font-size: 12px; line-height: 18px; font-weight: 600; white-space: nowrap; }
.address .icon-btn { margin-left: auto; }
.address .place { color: #5cb8da; }
.copy { width: 23px; height: 24px; }
.screen-place hr { height: 1px; margin: 3px 61px 12px 53px; }
.big-stars { width: 124px; height: 21px; margin: 0 auto; }
.comments { margin: 12px 0 20px 55px; font-size: 12px; line-height: 18px; font-weight: 600; }
.hours { display: flex; gap: 30px; padding: 0 0 25px 19px; font-size: 11px; font-weight: 600; color: #6474b4; }
.clock { width: 23px; height: 24px; }
.hours table { border-collapse: collapse; }
.hours th, .hours td { padding: 0; height: 24px; text-align: left; font-weight: 600; }
.hours th { width: 96px; }

/* Map */
.screen-map { margin-top: 1px; }
.city-map { position: relative; }
.city-map > svg { width: 100%; }
.city-map .search-box { position: absolute; top: 44px; left: 44px; right: 45px; background: #fff; }
.roads { fill: none; stroke: #f0f0f0; stroke-linejoin: round; }
.roads path { vector-effect: non-scaling-stroke; }
.street-names { font: 10px Roboto, sans-serif; fill: #8b8b8b; text-anchor: middle; }
.street-names .park { font-size: 9px; }
.street-names .area { font-size: 16px; fill: #a8a8a8; }

/* Profile */
.screen-profile .who { padding: 62px 30px 0 38px; gap: 15px; }
.screen-profile .form-title { margin: 35px 24px 0 20px; }
.screen-profile .action { width: 62px; }
.screen-profile .action svg { width: 18px; height: 18px; }
.screen-profile .details { padding: 0 23px 0 20px; }
.screen-profile .line:first-child, .screen-edit .line:first-child { margin-top: 11px; }
.screen-profile .cancel { margin: 16px 23px 8px 0; }
.screen-profile hr { margin: 0 22px 0 18px; }
.saved { font-size: 11px; line-height: 20px; font-weight: 700; }
.screen-profile .saved { margin: 6px 0 7px 32px; }
.screen-profile .cards, .screen-edit .cards { padding: 0 26px 0 28px; }

/* Edit profile */
.screen-edit .who { padding: 62px 31px 0 35px; gap: 18px; }
.screen-edit .form-title { margin: 34px 15px 0 20px; }
.screen-edit .details { padding: 1px 15px 0 20px; }
.screen-edit .line input { text-align: right; padding-right: 8px; }
.screen-edit .cancel { margin: 8px 20px 7px 0; }
.screen-edit hr { margin: 0 20px; }
.screen-edit .saved { margin: 18px 0 6px 31px; }
.screen-edit .cards .card:last-child { margin-bottom: 16px; }
```
